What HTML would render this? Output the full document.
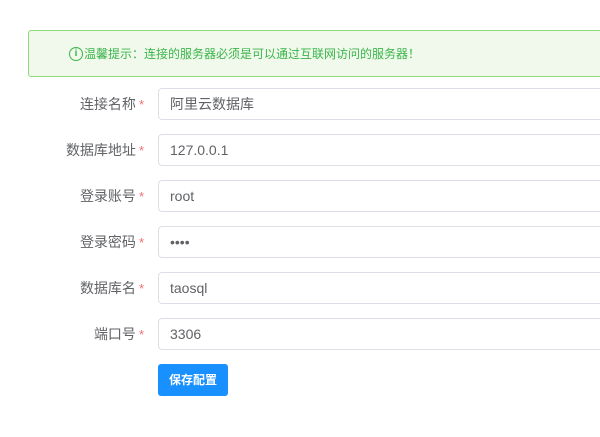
<!DOCTYPE html><html><head><meta charset="utf-8"><style>
body{margin:0;width:600px;height:437px;background:#fff;font-family:"Liberation Sans","Noto Sans CJK SC",sans-serif;overflow:hidden;position:relative}
.alert{position:absolute;left:28px;top:30px;width:600px;height:47px;background:#f0f9eb;border:1px solid #8fdb7c;border-radius:3px;box-sizing:border-box;color:#3ab54a;font-size:12px;line-height:46px;padding-left:40px}
.ic{position:absolute;left:40px;top:16px;width:14px;height:14px;border:1px solid #3ab54a;border-radius:50%;box-sizing:border-box;font-size:10px;line-height:12px;text-align:center;font-weight:bold}
.alert span{margin-left:15px}
.lab{position:absolute;right:456px;font-size:14px;color:#606266;line-height:32px;white-space:nowrap}
.lab i{color:#f56c6c;font-style:normal;margin-left:3px;font-size:13px}
.inp{position:absolute;left:158px;width:460px;height:32px;border:1px solid #dcdfe6;border-radius:4px;box-sizing:border-box;font-size:14px;color:#606266;line-height:30px;padding-left:11px}
.btn{position:absolute;left:158px;top:364px;width:70px;height:32px;background:#1890ff;border-radius:3px;color:#fff;font-size:12px;font-weight:bold;text-align:center;line-height:32px}
</style></head><body>
<div class="alert"><div class="ic">i</div><span>温馨提示：连接的服务器必须是可以通过互联网访问的服务器！</span></div>
<div class="lab" style="top:88px">连接名称<i>*</i></div><div class="inp" style="top:88px">阿里云数据库</div>
<div class="lab" style="top:134px">数据库地址<i>*</i></div><div class="inp" style="top:134px">127.0.0.1</div>
<div class="lab" style="top:180px">登录账号<i>*</i></div><div class="inp" style="top:180px">root</div>
<div class="lab" style="top:226px">登录密码<i>*</i></div><div class="inp" style="top:226px;font-size:14px">••••</div>
<div class="lab" style="top:272px">数据库名<i>*</i></div><div class="inp" style="top:272px">taosql</div>
<div class="lab" style="top:318px">端口号<i>*</i></div><div class="inp" style="top:318px">3306</div>
<div class="btn">保存配置</div>
</body></html>
